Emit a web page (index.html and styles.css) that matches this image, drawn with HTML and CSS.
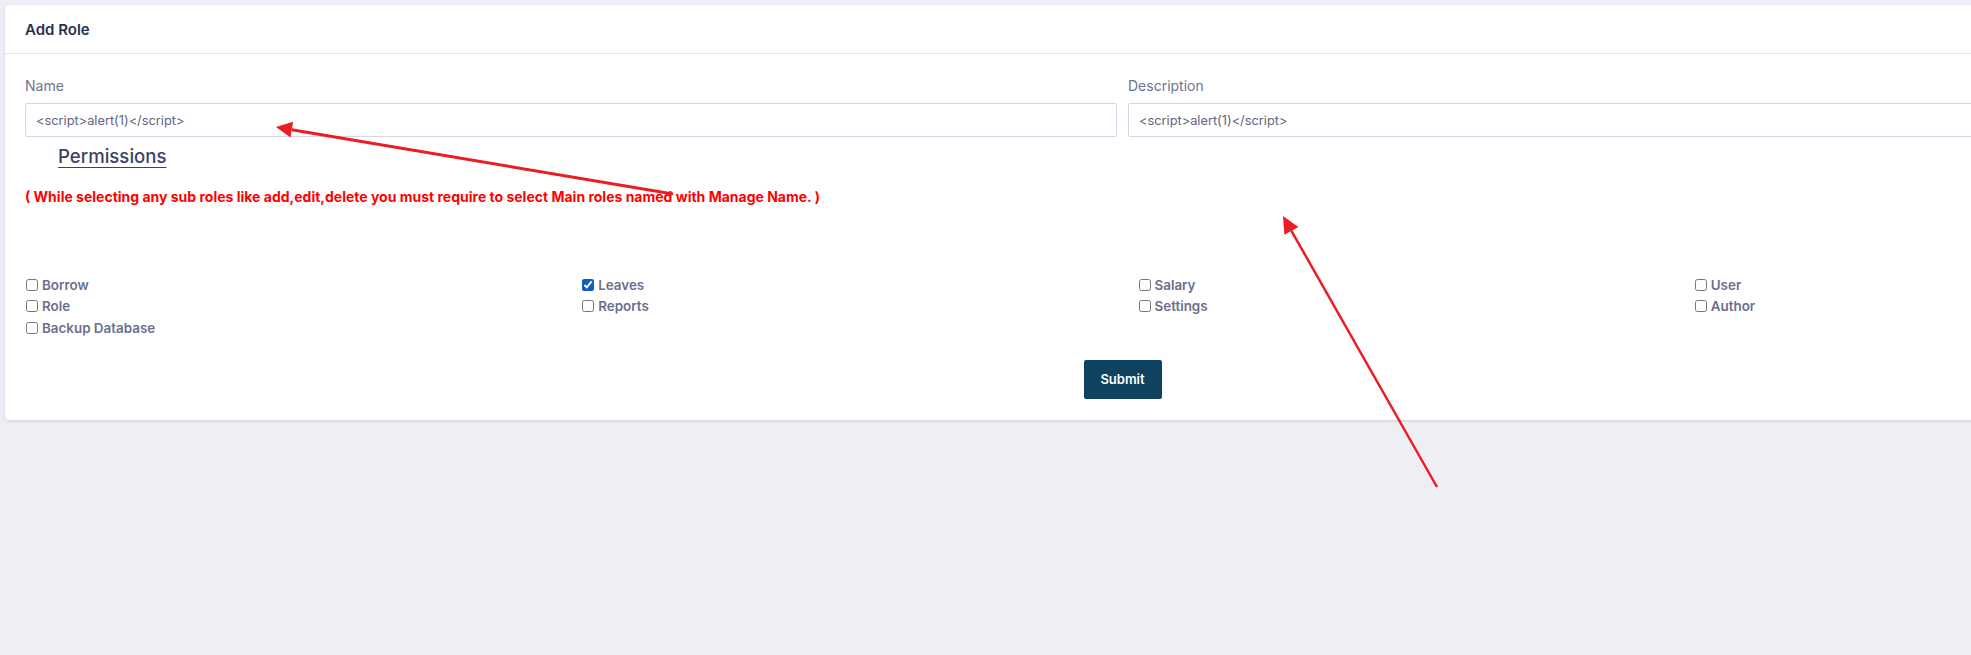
FILE: index.html
```html
<!DOCTYPE html>
<html lang="en">
<head>
<meta charset="utf-8">
<title>Add Role</title>
<link rel="stylesheet" href="styles.css">
</head>
<body>
<div class="card">
  <div class="card-header">Add Role</div>
  <form class="card-body">
    <div class="fields">
      <div class="field">
        <label class="label">Name</label>
        <input class="input" type="text" value="<script>alert(1)</script>">
      </div>
      <div class="field">
        <label class="label">Description</label>
        <input class="input" type="text" value="<script>alert(1)</script>">
      </div>
    </div>
    <h4 class="perm-title">Permissions</h4>
    <p class="warning">( While selecting any sub roles like add,edit,delete you must require to select Main roles named with Manage Name. )</p>
    <div class="perms">
      <label class="perm"><input type="checkbox" class="cb"><span>Borrow</span></label>
      <label class="perm"><input type="checkbox" class="cb" checked><span>Leaves</span></label>
      <label class="perm"><input type="checkbox" class="cb"><span>Salary</span></label>
      <label class="perm"><input type="checkbox" class="cb"><span>User</span></label>
      <label class="perm"><input type="checkbox" class="cb"><span>Role</span></label>
      <label class="perm"><input type="checkbox" class="cb"><span>Reports</span></label>
      <label class="perm"><input type="checkbox" class="cb"><span>Settings</span></label>
      <label class="perm"><input type="checkbox" class="cb"><span>Author</span></label>
      <label class="perm"><input type="checkbox" class="cb"><span>Backup Database</span></label>
    </div>
    <div class="actions">
      <button type="button" class="btn">Submit</button>
    </div>
  </form>
</div>
<svg class="annotations" width="1971" height="655" viewBox="0 0 1971 655">
  <line x1="673" y1="194" x2="291.8" y2="129.7" stroke="#ec1c24" stroke-width="3"/>
  <polygon points="276,127 293.1,121.8 290.5,137.6" fill="#ec1c24"/>
  <line x1="1437" y1="487" x2="1291.4" y2="230.8" stroke="#ec1c24" stroke-width="2.5"/>
  <polygon points="1283,216 1298.4,226.9 1284.4,234.8" fill="#ec1c24"/>
</svg>
</body>
</html>
```
FILE: styles.css
```css
html, body {
  margin: 0;
  padding: 0;
  overflow: hidden;
  background: #eeeff5;
  font-family: Inter, "Liberation Sans", sans-serif;
}
body {
  padding: 5px 0 0 5px;
  height: 655px;
  box-sizing: border-box;
}
.card {
  width: 2235px;
  background: #ffffff;
  border-radius: 4px;
  box-shadow: 0 1px 3px rgba(60, 60, 110, 0.18);
}
.card-header {
  height: 48px;
  border-bottom: 1px solid #e6e6ef;
  padding: 0 20px;
  display: flex;
  align-items: center;
  font-size: 15px;
  font-weight: 600;
  color: #2b2f4a;
}
.card-body {
  margin: 0;
  padding: 22px 20px 21px;
}
.fields {
  display: grid;
  grid-template-columns: 1092px 1fr;
  column-gap: 11px;
}
.field {
  display: flex;
  flex-direction: column;
}
.label {
  font-size: 14px;
  line-height: 18px;
  color: #6f7390;
  margin-top: 1px;
  margin-bottom: 8px;
}
.input {
  height: 34px;
  box-sizing: border-box;
  border: 1px solid #d6d4e6;
  border-radius: 2px;
  padding: 0 10px;
  font-family: Inter, "Liberation Sans", sans-serif;
  font-size: 12.8px;
  color: #5f6380;
  background: #fff;
  outline: none;
}
.perm-title {
  margin: 8px 0 0;
  padding-left: 33px;
  font-size: 18.6px;
  line-height: 22px;
  font-weight: 500;
  color: #3d4263;
  text-decoration: underline;
  text-underline-offset: 4px;
  text-decoration-thickness: 1px;
}
.warning {
  margin: 20px 0 0;
  font-size: 14px;
  line-height: 20px;
  font-weight: 700;
  color: #ff0000;
}
.perms {
  margin: 67px -15px 0;
  display: grid;
  grid-template-columns: repeat(4, 1fr);
  grid-auto-rows: 21.5px;
}
.perm {
  padding: 0 15px;
  display: flex;
  align-items: center;
  font-size: 13.4px;
  font-weight: 600;
  color: #6b6f8e;
}
.cb {
  width: 12px;
  height: 12px;
  margin: 0 4px 0 1px;
  accent-color: #0d5fc7;
}
.actions {
  margin-top: 21px;
  display: flex;
  justify-content: center;
}
.btn {
  width: 78px;
  height: 39px;
  border: none;
  border-radius: 2px;
  background: #0f4261;
  color: #ffffff;
  font-family: Inter, "Liberation Sans", sans-serif;
  font-size: 13px;
  font-weight: 600;
}
.annotations {
  position: absolute;
  left: 0;
  top: 0;
  pointer-events: none;
}
```
